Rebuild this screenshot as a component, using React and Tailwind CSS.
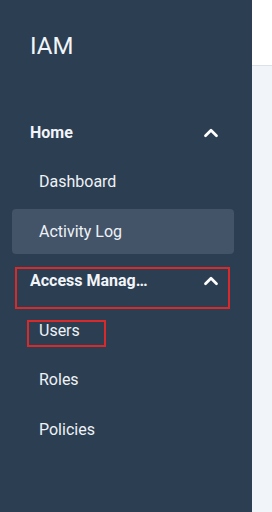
import { ChevronUp } from "lucide-react";

function Item({ label, active, boxed }) {
  return (
    <div
      className={`relative flex h-[45px] items-center rounded pl-[27px] text-[16px] text-[#eef2f6] ${
        active ? "bg-[#435368]" : ""
      }`}
    >
      {label}
      {boxed && (
        <div className="absolute left-[15px] top-[11.5px] h-[27px] w-[79px] border-2 border-[#d82a2a]" />
      )}
    </div>
  );
}

function Group({ label, boxed }) {
  return (
    <div className="relative flex h-[45px] items-center justify-between pl-[18px] pr-[12px] text-[16px] font-bold text-[#f1f5f9]">
      <span>{label}</span>
      <ChevronUp size={22} strokeWidth={3} className="text-white" />
      {boxed && (
        <div className="absolute left-[3px] right-[4px] top-[8px] h-[42px] border-2 border-[#d82a2a]" />
      )}
    </div>
  );
}

export default function App() {
  return (
    <div
      className="flex h-[512px] w-[272px] overflow-hidden"
      style={{ fontFamily: "Roboto, 'Liberation Sans', sans-serif" }}
    >
      <aside className="flex w-[252px] shrink-0 flex-col bg-[#2c3e52] pl-[12px] pr-[18px]">
        <div className="flex h-[92px] items-center pl-[18px] text-[24px] text-[#f1f5f9]">
          IAM
        </div>
        <nav className="flex flex-col gap-[4.5px] pt-[18px]">
          <Group label="Home" />
          <Item label="Dashboard" />
          <Item label="Activity Log" active />
          <Group label="Access Manag…" boxed />
          <Item label="Users" boxed />
          <Item label="Roles" />
          <Item label="Policies" />
        </nav>
      </aside>
      <main className="flex flex-1 flex-col">
        <div className="h-[66px] border-b border-[#dde1ea] bg-white" />
        <div className="flex-1 bg-[#f1f4f8]" />
      </main>
    </div>
  );
}
